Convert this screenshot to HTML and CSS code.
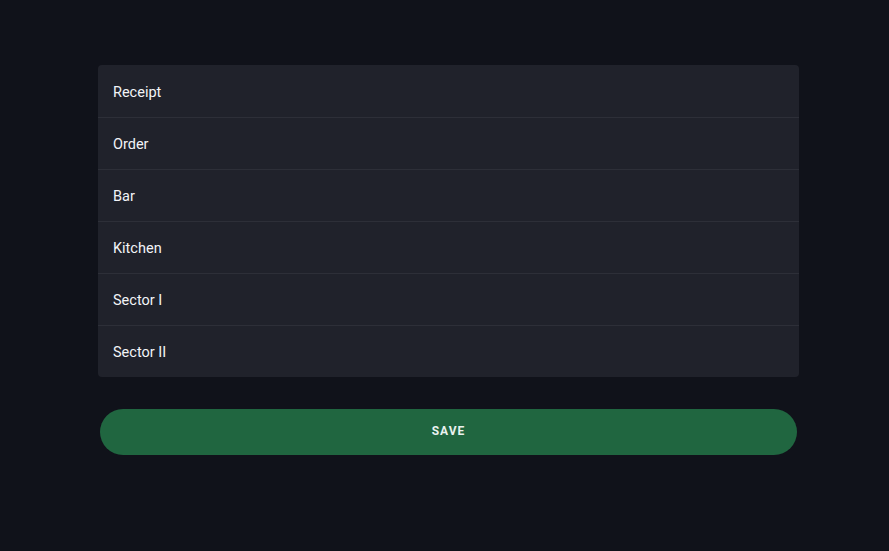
FILE: index.html
```html
<!DOCTYPE html>
<html>
<head>
<meta charset="utf-8">
<link rel="stylesheet" href="styles.css">
</head>
<body>
<main class="page">
  <ul class="list">
    <li class="item">Receipt</li>
    <li class="item">Order</li>
    <li class="item">Bar</li>
    <li class="item">Kitchen</li>
    <li class="item">Sector I</li>
    <li class="item">Sector II</li>
  </ul>
  <button class="save">SAVE</button>
</main>
</body>
</html>
```
FILE: styles.css
```css
html, body {
  margin: 0;
  padding: 0;
  background: #10121a;
  height: 100%;
}
body {
  font-family: Roboto, "Noto Sans", sans-serif;
}
.page {
  width: 701px;
  margin-left: 98px;
  padding-top: 65px;
  display: flex;
  flex-direction: column;
}
.list {
  list-style: none;
  margin: 0;
  padding: 0;
  background: #20222b;
  border-radius: 4px;
}
.item {
  height: 52px;
  box-sizing: border-box;
  display: flex;
  align-items: center;
  padding: 2px 15px 0;
  color: #f2f4f7;
  font-size: 14.5px;
  border-top: 1px solid #2d2f38;
}
.item:first-child {
  border-top: none;
}
.save {
  margin: 32px 2px 0;
  height: 46px;
  padding: 0 0 2px;
  border: none;
  border-radius: 23px;
  background: #206640;
  color: #eaf2f0;
  font-family: Roboto, sans-serif;
  font-weight: 700;
  font-size: 12px;
  letter-spacing: 1px;
}
```
